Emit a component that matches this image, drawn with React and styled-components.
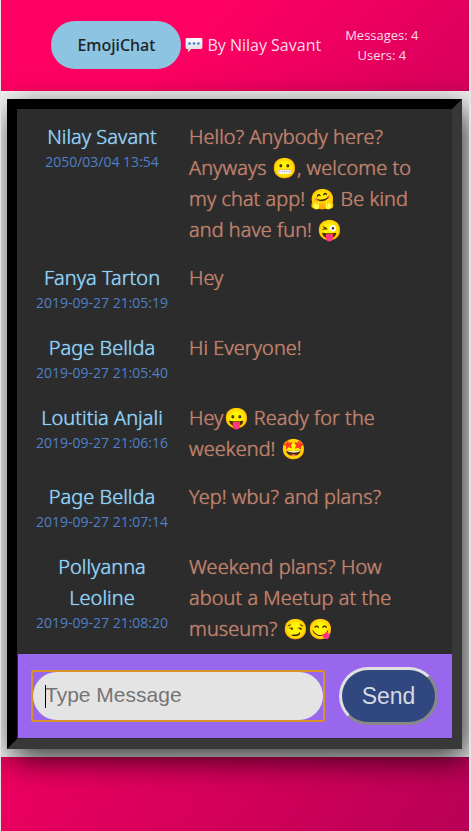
import React from 'react';
import styled, { createGlobalStyle } from 'styled-components';

const GlobalStyle = createGlobalStyle`
  * { box-sizing: border-box; }
  body {
    margin: 0;
    background: #e4e4e4;
    font-family: "Noto Sans", "Open Sans", sans-serif;
  }
`;

const Page = styled.div`
  display: flex;
  flex-direction: column;
  min-height: 100vh;
  margin: 0 2px 0 1px;
  background: #f4f4f4;
  overflow: hidden;
`;

const Header = styled.header`
  display: flex;
  align-items: center;
  justify-content: center;
  height: 91px;
  padding-bottom: 1px;
  color: #fddce8;
  background: linear-gradient(135deg, #ff0062 40%, #d8005c 100%);
`;

const Brand = styled.a`
  display: flex;
  align-items: center;
  height: 48px;
  padding: 0 26px;
  border-radius: 24px;
  background: #8cc4e2;
  color: #222;
  font-size: 16px;
  font-weight: 500;
  text-decoration: none;
`;

const Byline = styled.div`
  display: flex;
  align-items: center;
  gap: 4px;
  margin: 0 24px 0 4px;
  font-family: "Open Sans", sans-serif;
  font-size: 16px;
`;

const Stats = styled.div`
  font-family: "Open Sans", sans-serif;
  font-size: 13px;
  line-height: 20px;
  text-align: center;
`;

const Panel = styled.main`
  position: relative;
  margin: 8px 7px 8px 6px;
  border: 10px solid;
  border-color: #000 #383838 #383838 #000;
  background: #2c2c2c;
  box-shadow: 5px 10px 30px rgba(0, 0, 0, 0.8);
`;

const Messages = styled.ul`
  display: flex;
  flex-direction: column;
  gap: 17px;
  margin: 0;
  padding: 12px 15px 10px;
  list-style: none;
`;

const Message = styled.li`
  display: grid;
  grid-template-columns: 140px minmax(0, 1fr);
  gap: 17px;
  font-size: 20px;
  font-weight: 300;
  line-height: 31px;
`;

const Author = styled.div`
  color: #8fd3fa;
  text-align: center;
  text-shadow: 0 0 1px #8fd3fa;
`;

const Time = styled.time`
  display: block;
  color: #4f80c8;
  font-family: "Open Sans", sans-serif;
  font-size: 14px;
  font-weight: 400;
  line-height: 20px;
  padding-bottom: 2px;
  text-shadow: none;
  white-space: nowrap;
`;

const Text = styled.p`
  margin: 0;
  color: #c0826c;
  text-shadow: 0 0 1px #c0826c;
`;

const Emoji = styled.span`
  filter: hue-rotate(4deg) saturate(1.3) brightness(1.06);
  text-shadow: none;
`;

const Composer = styled.form`
  display: flex;
  align-items: center;
  gap: 14px;
  height: 84px;
  margin: 0 0 1px 1px;
  padding: 0 14px 0 13px;
  background: #9966ee;
`;

const Field = styled.label`
  position: relative;
  flex: 1;
  min-width: 0;
  display: flex;
  border: 2px solid #d9902e;
  border-radius: 2px;

  &::before {
    content: "";
    position: absolute;
    left: 12px;
    top: 13px;
    width: 1px;
    height: 23px;
    background: #000;
  }
`;

const Input = styled.input`
  width: 100%;
  height: 48px;
  padding: 0 12px 2px;
  border: 0;
  border-radius: 24px;
  outline: 0;
  background: #e4e4e4;
  color: #222;
  caret-color: transparent;
  font: 21px "Liberation Sans", Arial, sans-serif;

  &::placeholder { color: #757575; }
`;

const Send = styled.button`
  width: 99px;
  height: 58px;
  padding: 0;
  border: 3px solid;
  border-color: #e0e0e0 #888 #888 #e0e0e0;
  border-radius: 29px;
  background: #30477f;
  color: #d6dae4;
  font: 23px "Liberation Sans", Arial, sans-serif;
`;

const Footer = styled.footer`
  flex: 1;
  min-height: 74px;
  background: linear-gradient(135deg, #f00060, #b80056);
`;

const messages = [
  ['Nilay Savant', '2050/03/04 13:54', 'Hello? Anybody here? Anyways 😬, welcome to my chat app! 🤗 Be kind and have fun! 😜'],
  ['Fanya Tarton', '2019-09-27 21:05:19', 'Hey'],
  ['Page Bellda', '2019-09-27 21:05:40', 'Hi Everyone!'],
  ['Loutitia Anjali', '2019-09-27 21:06:16', 'Hey😛 Ready for the weekend! 🤩'],
  ['Page Bellda', '2019-09-27 21:07:14', 'Yep! wbu? and plans?'],
  ['Pollyanna Leoline', '2019-09-27 21:08:20', 'Weekend plans? How about a Meetup at the museum? 😏😋'],
];

function withEmoji(text) {
  return text
    .split(/(\p{Extended_Pictographic}+)/u)
    .map((part, i) => (i % 2 ? <Emoji key={i}>{part}</Emoji> : part));
}

function SpeechBubble() {
  return (
    <svg width="18" height="16" viewBox="0 0 18 16" aria-hidden="true">
      <defs>
        <linearGradient id="bubble" x1="0" y1="0" x2="0" y2="1">
          <stop offset="0" stopColor="#fff" />
          <stop offset="1" stopColor="#d8d8d8" />
        </linearGradient>
      </defs>
      <path
        d="M2 1h14a1.4 1.4 0 0 1 1.4 1.4v8.2A1.4 1.4 0 0 1 16 12H6c-.6 1.4-1.8 2.6-3.6 3 .6-.8.8-1.8.8-3H2A1.4 1.4 0 0 1 .6 10.6V2.4A1.4 1.4 0 0 1 2 1z"
        fill="url(#bubble)"
      />
      <circle cx="4.6" cy="6.5" r="1.3" fill="#2f7fe0" />
      <circle cx="9" cy="6.5" r="1.3" fill="#2f7fe0" />
      <circle cx="13.4" cy="6.5" r="1.3" fill="#2f7fe0" />
    </svg>
  );
}

export default function App() {
  return (
    <>
      <GlobalStyle />
      <Page>
        <Header>
          <Brand href="#">EmojiChat</Brand>
          <Byline><SpeechBubble />By Nilay Savant</Byline>
          <Stats>
            <div>Messages: 4</div>
            <div>Users: 4</div>
          </Stats>
        </Header>
        <Panel>
          <Messages>
            {messages.map(([name, time, text]) => (
              <Message key={time}>
                <Author>{name}<Time>{time}</Time></Author>
                <Text>{withEmoji(text)}</Text>
              </Message>
            ))}
          </Messages>
          <Composer onSubmit={(e) => e.preventDefault()}>
            <Field>
              <Input type="text" placeholder="Type Message" aria-label="Type Message" />
            </Field>
            <Send type="submit">Send</Send>
          </Composer>
        </Panel>
        <Footer />
      </Page>
    </>
  );
}
